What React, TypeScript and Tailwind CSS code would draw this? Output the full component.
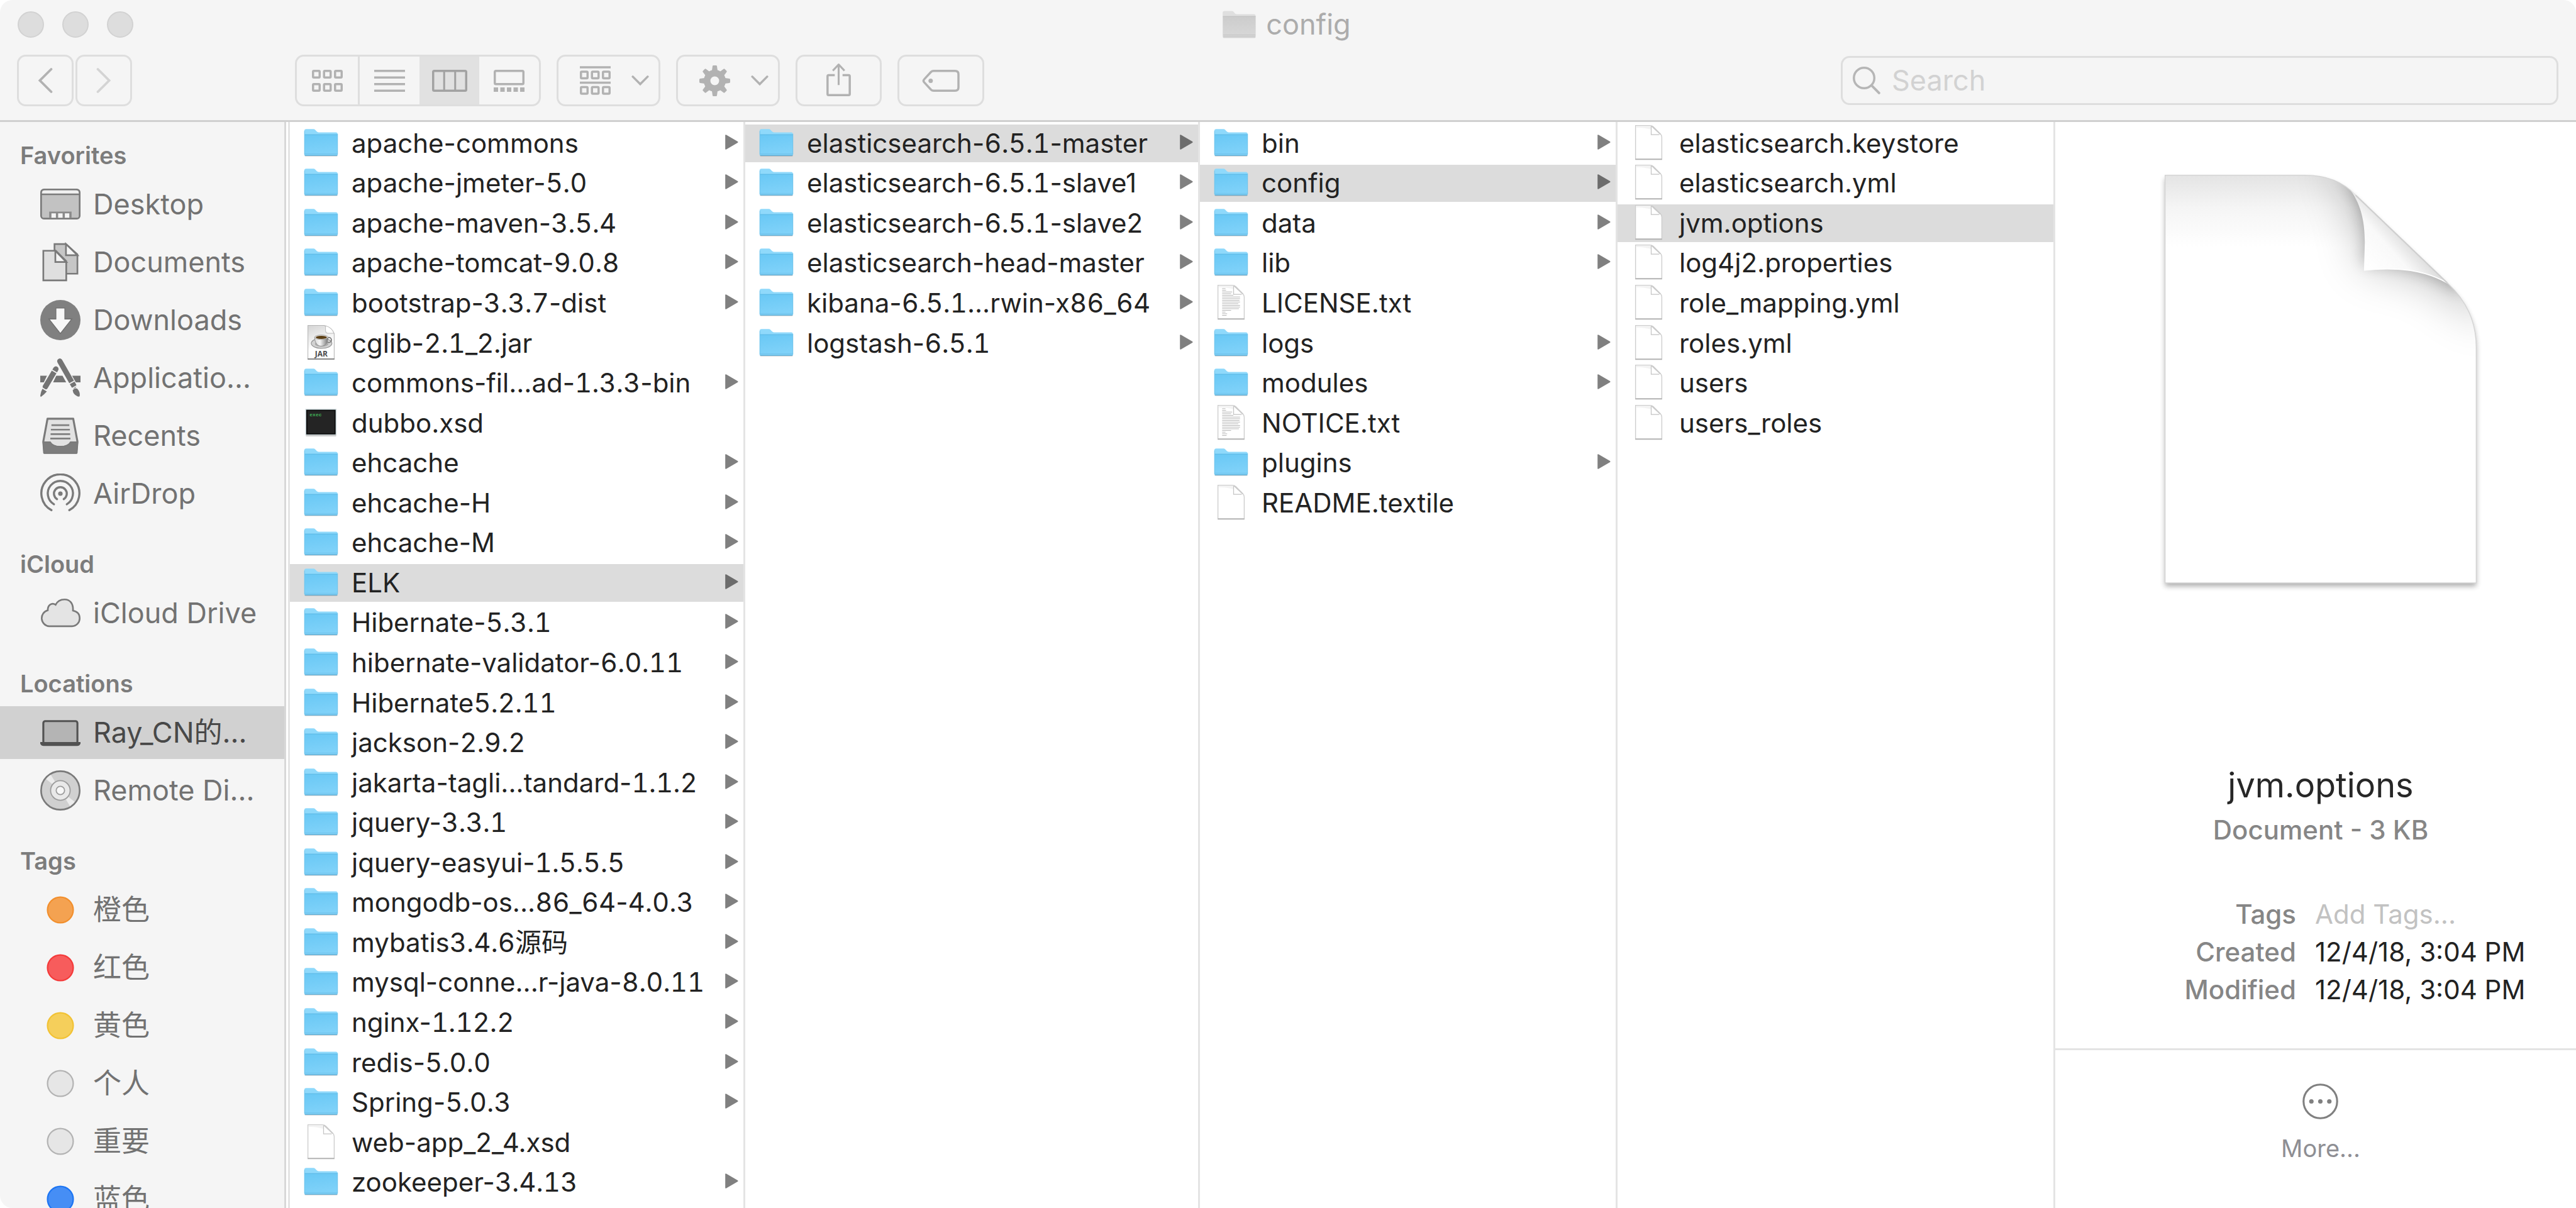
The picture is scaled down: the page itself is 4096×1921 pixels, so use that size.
import React from "react";

type Kind = "folder" | "file" | "text" | "jar" | "exec";
type Entry = { name: string; kind?: Kind; selected?: boolean };

const dir = (name: string, selected = false): Entry => ({ name, kind: "folder", selected });
const file = (name: string, kind: Kind = "file", selected = false): Entry => ({ name, kind, selected });

const columns: { label: string; entries: Entry[] }[] = [
  {
    label: "Software",
    entries: [
      dir("apache-commons"),
      dir("apache-jmeter-5.0"),
      dir("apache-maven-3.5.4"),
      dir("apache-tomcat-9.0.8"),
      dir("bootstrap-3.3.7-dist"),
      file("cglib-2.1_2.jar", "jar"),
      dir("commons-fil...ad-1.3.3-bin"),
      file("dubbo.xsd", "exec"),
      dir("ehcache"),
      dir("ehcache-H"),
      dir("ehcache-M"),
      dir("ELK", true),
      dir("Hibernate-5.3.1"),
      dir("hibernate-validator-6.0.11"),
      dir("Hibernate5.2.11"),
      dir("jackson-2.9.2"),
      dir("jakarta-tagli...tandard-1.1.2"),
      dir("jquery-3.3.1"),
      dir("jquery-easyui-1.5.5.5"),
      dir("mongodb-os...86_64-4.0.3"),
      dir("mybatis3.4.6源码"),
      dir("mysql-conne...r-java-8.0.11"),
      dir("nginx-1.12.2"),
      dir("redis-5.0.0"),
      dir("Spring-5.0.3"),
      file("web-app_2_4.xsd"),
      dir("zookeeper-3.4.13"),
    ],
  },
  {
    label: "ELK",
    entries: [
      dir("elasticsearch-6.5.1-master", true),
      dir("elasticsearch-6.5.1-slave1"),
      dir("elasticsearch-6.5.1-slave2"),
      dir("elasticsearch-head-master"),
      dir("kibana-6.5.1...rwin-x86_64"),
      dir("logstash-6.5.1"),
    ],
  },
  {
    label: "elasticsearch-6.5.1-master",
    entries: [
      dir("bin"),
      dir("config", true),
      dir("data"),
      dir("lib"),
      file("LICENSE.txt", "text"),
      dir("logs"),
      dir("modules"),
      file("NOTICE.txt", "text"),
      dir("plugins"),
      file("README.textile"),
    ],
  },
  {
    label: "config",
    entries: [
      file("elasticsearch.keystore"),
      file("elasticsearch.yml"),
      file("jvm.options", "file", true),
      file("log4j2.properties"),
      file("role_mapping.yml"),
      file("roles.yml"),
      file("users"),
      file("users_roles"),
    ],
  },
];

/* ---------- file list icons ---------- */

function Defs() {
  return (
    <svg aria-hidden="true" className="absolute h-0 w-0">
      <defs>
        <linearGradient id="folderFront" x1="0" y1="0" x2="0.2" y2="1">
          <stop offset="0" stopColor="#69c8f5" />
          <stop offset="1" stopColor="#80d2f9" />
        </linearGradient>
        <linearGradient id="grayFront" x1="0" y1="0" x2="0" y2="1">
          <stop offset="0" stopColor="#cccccc" />
          <stop offset="1" stopColor="#d8d8d8" />
        </linearGradient>
        <linearGradient id="jarPage" x1="0" y1="0" x2="0.3" y2="1">
          <stop offset="0" stopColor="#d4d4d4" />
          <stop offset="0.7" stopColor="#ffffff" />
        </linearGradient>
        <linearGradient id="cup" x1="0" y1="0" x2="1" y2="0">
          <stop offset="0" stopColor="#dcdcdc" />
          <stop offset="0.4" stopColor="#f4f4f4" />
          <stop offset="1" stopColor="#777777" />
        </linearGradient>
      </defs>
    </svg>
  );
}

function FolderIcon() {
  return (
    <svg viewBox="0 0 64 72" className="h-16 w-[57px] shrink-0" aria-hidden="true">
      <rect x="2.5" y="56" width="59" height="3.5" rx="1.5" fill="#000" opacity="0.13" />
      <path d="M2 14q0-3.500 3.500-3.500h13q1.800 0 3 1.300l3 3.200q1.200 1.300 3 1.300h31q3 0 3 3V56q0 2-2 2H4q-2 0-2-2z" fill="#8fd9fb" />
      <path d="M2.500 20H61.500V56q0 1.500-1.500 1.500H4q-1.500 0-1.500-1.500z" fill="url(#folderFront)" />
      <path d="M2.500 20.500H61.500" stroke="#5db8e4" strokeWidth="1.200" />
      <path d="M3 54.500H61" stroke="#6fc3ec" strokeWidth="1" />
      <path d="M3 57.500H61" stroke="#58a7cf" strokeWidth="1.500" />
      <path d="M2.500 14V56M61.500 19V56" stroke="#69bfe8" strokeWidth="1" />
    </svg>
  );
}

function PageIcon({ lines = false }: { lines?: boolean }) {
  return (
    <svg viewBox="0 0 64 72" className="h-16 w-[57px] shrink-0" aria-hidden="true">
      <path d="M8.500 4H34q4 0 6.500 2.500L53 19q2.500 2.500 2.500 6V64H8.500z" fill="#fff" stroke="#cccccc" strokeWidth="1.500" />
      <path d="M9 8V5H34q4 0 5 4L38 12Q24 7 9 8z" fill="#eeeeee" opacity="0.7" />
      <path d="M36.500 5V20.500H51" fill="#fff" stroke="#c4c4c4" strokeWidth="1.400" />
      <path d="M37 5L53 20" stroke="#c8c8c8" strokeWidth="1.600" />
      <path d="M8 64.500H56" stroke="#b2b2b2" strokeWidth="1.800" />
      {lines && (
        <g stroke="#a5a5a5" strokeWidth="0.900">
          <path d="M16 10h6M16 13h7M16 16h18M16 19h16M16 22h20M16 25h32M16 28h32M16 31h31M16 34h32M16 37h29M16 40h32M16 43h32M16 46h30M16 49h16M16 52h6M16 55h9M16 58h8" />
        </g>
      )}
    </svg>
  );
}

function JarIcon() {
  return (
    <svg viewBox="0 0 64 72" className="h-16 w-[57px] shrink-0" aria-hidden="true">
      <path d="M8.500 4H38L55.500 18V64H8.500z" fill="url(#jarPage)" stroke="#b5b5b5" strokeWidth="1.200" />
      <path d="M40 4.500V13q0 5 5 5h10Q52 8 40 4.500z" fill="#fff" stroke="#bcbcbc" strokeWidth="1.200" />
      <ellipse cx="33" cy="36" rx="18.500" ry="9" fill="#d2d2d2" stroke="#8d8d8d" strokeWidth="1.200" />
      <ellipse cx="33" cy="37" rx="12" ry="5" fill="#aaaaaa" />
      <circle cx="46" cy="30" r="4.500" fill="none" stroke="#777" strokeWidth="2" />
      <path d="M20.500 25.500C21 36 26 41 32.500 41S44 36 44.500 25.500z" fill="url(#cup)" stroke="#7d7d7d" strokeWidth="0.800" />
      <ellipse cx="32.500" cy="25" rx="12" ry="4" fill="#e8e8e8" stroke="#8a8a8a" strokeWidth="0.800" />
      <ellipse cx="32.500" cy="25.300" rx="10" ry="2.800" fill="#5c3f15" />
      <text x="32.500" y="60" textAnchor="middle" fontFamily="Open Sans" fontWeight="700" fontSize="13.500" fill="#4a4a4a">
        JAR
      </text>
      <path d="M8 64H56" stroke="#7c7c7c" strokeWidth="2.200" />
    </svg>
  );
}

function ExecIcon() {
  return (
    <svg viewBox="0 0 64 72" className="h-16 w-[57px] shrink-0" aria-hidden="true">
      <path d="M5 57H59" stroke="#000" strokeWidth="5" opacity="0.2" />
      <rect x="4" y="10.500" width="55.500" height="46.500" fill="#c4d2d6" />
      <rect x="5.500" y="12" width="52.500" height="44" fill="#0c0c0c" />
      <rect x="7.500" y="14" width="48.500" height="40" fill="#242424" />
      <text x="11.500" y="23.500" fontFamily="Liberation Mono" fontWeight="700" fontSize="9" fill="#3fae55">
        exec
      </text>
    </svg>
  );
}

function EntryIcon({ kind }: { kind?: Kind }) {
  if (kind === "folder") return <FolderIcon />;
  if (kind === "jar") return <JarIcon />;
  if (kind === "exec") return <ExecIcon />;
  return <PageIcon lines={kind === "text"} />;
}

function EntryName({ name }: { name: string }) {
  return (
    <span className="min-w-0 flex-1 text-[42px] leading-[56px] whitespace-nowrap text-[#222222]">
      {name.split(/(\d[\d.]*\d)/).map((part, i) =>
        i % 2 === 1 ? (
          <span key={i} className="tabular-nums">
            {part}
          </span>
        ) : (
          part
        ),
      )}
    </span>
  );
}

function Column({ label, entries }: { label: string; entries: Entry[] }) {
  return (
    <ul
      aria-label={label}
      className="grid min-h-0 min-w-0 grid-cols-[minmax(0,1fr)] grid-rows-[repeat(27,minmax(0,1fr))] gap-1 border-r-[3px] border-[#e4e4e4] bg-white pt-1 pb-[11px]"
    >
      {entries.map((e) => (
        <li key={e.name} className="min-h-0">
          <button
            type="button"
            aria-pressed={!!e.selected}
            className={`flex h-full w-full items-center gap-5 pr-2 pl-[21px] text-left ${e.selected ? "bg-[#dcdcdc]" : ""}`}
          >
            <EntryIcon kind={e.kind} />
            <EntryName name={e.name} />
            {e.kind === "folder" && (
              <svg viewBox="0 0 24 28" className={`mb-1 h-6 w-[21px] shrink-0 ${e.selected ? "text-[#6c6c6c]" : "text-[#808080]"}`} aria-hidden="true">
                <path d="M0 1.500Q0-.5 2 .6L23 12.700Q24.500 14 23 15.300L2 27.400Q0 28.500 0 26.500z" fill="currentColor" />
              </svg>
            )}
          </button>
        </li>
      ))}
    </ul>
  );
}

/* ---------- sidebar ---------- */

const sideIcons: Record<string, React.ReactNode> = {
  desktop: (
    <>
      <rect x="1.500" y="9.500" width="69" height="52" rx="5" fill="#c2c2c2" stroke="#7a7a7a" strokeWidth="3" />
      <path d="M3 17q0-6 5-6h56q5 0 5 6z" fill="#f0f0f0" />
      <path d="M2 18H70" stroke="#7a7a7a" strokeWidth="3" />
      <path d="M16 60V49H56V60z" fill="#8a8a8a" />
      <path d="M20 52h8v8h-8zM32 52h8v8h-8zM44 52h8v8h-8z" fill="#f4f4f4" />
    </>
  ),
  documents: (
    <g stroke="#7a7a7a" strokeWidth="3">
      <path d="M25.500 3.500H46L66.500 22V56.500H25.500z" fill="#c6c6c6" />
      <path d="M46 3.500V23.500H66.500z" fill="#f5f5f5" />
      <path d="M5.500 15.500H28L46.500 34V68.500H5.500z" fill="#dfdfdf" />
      <path d="M27 15.500V35.500H46.500z" fill="#f5f5f5" />
    </g>
  ),
  downloads: (
    <>
      <circle cx="36" cy="36" r="36" fill="#808080" />
      <path d="M28 14.500H44V34H56.500L36 60 15.500 34H28z" fill="#f7f7f7" stroke="#6f6f6f" strokeWidth="1.500" />
    </>
  ),
  applications: (
    <>
      <path d="M0 32H72V44H0z" fill="#747474" />
      <path d="M28 16L7 60M34 6L66 64" stroke="#f5f5f5" strokeWidth="15" />
      <path d="M35 6L60 50" stroke="#747474" strokeWidth="9.500" strokeLinecap="round" />
      <path d="M28 20L9 52" stroke="#747474" strokeWidth="9.500" strokeLinecap="round" />
      <path d="M4 55L12 60Q8 65 1 70L0 68Q1 60 4 55z" fill="#747474" />
      <path d="M58 58Q62 53 66 55Q72 61 70.500 69Q68 70 66 68.500Q59 66 58 58z" fill="#747474" />
      <path d="M21 22L33 29M49 48L62 41M53 57L67 49M2 53L15 61" stroke="#f5f5f5" strokeWidth="2" />
    </>
  ),
  recents: (
    <>
      <path d="M13 5.500H59L66.500 46 65 66.500H7L5.500 46z" fill="#e2e2e2" stroke="#7a7a7a" strokeWidth="3.500" strokeLinejoin="round" />
      <path d="M20 17H52M19 25H53M18.500 33H53.500M18 41H54" stroke="#7f7f7f" strokeWidth="3" />
      <path d="M5 47H18Q22 55 36 55T54 47H67L65 67H7z" fill="#7d7d7d" stroke="#7a7a7a" strokeWidth="2" strokeLinejoin="round" />
      <path d="M19 46.500Q23 54 36 54T53 46.500" fill="#e2e2e2" />
    </>
  ),
  airdrop: (
    <g fill="none" stroke="#7a7a7a" strokeWidth="3.800" strokeLinecap="round">
      <circle cx="36" cy="36" r="4" fill="#7a7a7a" stroke="none" />
      <path d="M30 45.800A11.500 11.500 0 1 1 42 45.800" />
      <path d="M24.500 55A22.500 22.500 0 1 1 47.500 55" />
      <path d="M20 65.500A34 34 0 1 1 52 65.500" />
    </g>
  ),
  cloud: (
    <path
      d="M16 59.500A14.500 14.500 0 0 1 13.500 31C13 21 21 16.500 27.500 21C31 14 37 11.500 43.500 11.500C53 11.500 59.500 19 58.500 31.500C66 33 70.500 38 70.500 45A14 14 0 0 1 57 59.500z"
      fill="#e4e4e4"
      stroke="#7a7a7a"
      strokeWidth="3"
    />
  ),
  laptop: (
    <>
      <rect x="5.500" y="15.500" width="61" height="40" rx="3.500" fill="#b4b4b4" stroke="#525252" strokeWidth="3.500" />
      <path d="M0 53H72V56Q70 60 66 60H6Q2 60 0 56z" fill="#525252" />
    </>
  ),
  disc: (
    <>
      <circle cx="36" cy="36" r="34.500" fill="#d0d0d0" />
      <path d="M36 36L9 14.500A34 34 0 0 1 18 6.500zM36 36L63 57.500A34 34 0 0 1 54 65.500z" fill="#ececec" />
      <circle cx="36" cy="36" r="34.500" fill="none" stroke="#7a7a7a" strokeWidth="3" />
      <circle cx="36" cy="36" r="17.500" fill="#e9e9e9" stroke="#9c9c9c" strokeWidth="2" />
      <circle cx="36" cy="36" r="7.500" fill="#f8f8f8" stroke="#9c9c9c" strokeWidth="2" />
    </>
  ),
};

const tag = (fill: string, stroke: string) => <circle cx="36" cy="36" r="23" fill={fill} stroke={stroke} strokeWidth="2.500" />;

type SideItem = { label: string; icon: React.ReactNode; active?: boolean };
const sections: { title: string; items: SideItem[] }[] = [
  {
    title: "Favorites",
    items: [
      { label: "Desktop", icon: sideIcons.desktop },
      { label: "Documents", icon: sideIcons.documents },
      { label: "Downloads", icon: sideIcons.downloads },
      { label: "Applicatio...", icon: sideIcons.applications },
      { label: "Recents", icon: sideIcons.recents },
      { label: "AirDrop", icon: sideIcons.airdrop },
    ],
  },
  { title: "iCloud", items: [{ label: "iCloud Drive", icon: sideIcons.cloud }] },
  {
    title: "Locations",
    items: [
      { label: "Ray_CN的...", icon: sideIcons.laptop, active: true },
      { label: "Remote Di...", icon: sideIcons.disc },
    ],
  },
  {
    title: "Tags",
    items: [
      { label: "橙色", icon: tag("#f4a251", "#f28f2c") },
      { label: "红色", icon: tag("#f75c5c", "#f43a3a") },
      { label: "黄色", icon: tag("#f5cf5b", "#f2c233") },
      { label: "个人", icon: tag("#e6e6e6", "#b3b3b3") },
      { label: "重要", icon: tag("#e6e6e6", "#b3b3b3") },
      { label: "蓝色", icon: tag("#468ef5", "#1c75f3") },
    ],
  },
];

function Sidebar() {
  return (
    <nav aria-label="Sidebar" className="flex min-h-0 min-w-0 border-r-[3px] border-[#e4e4e4]">
      <div className="flex min-w-0 flex-1 flex-col gap-[46px] overflow-hidden border-r-[3px] border-[#d8d8d8] bg-[#f5f5f5] pt-[29px]">
        {sections.map((s) => (
          <section key={s.title} className="shrink-0">
            <h2 className="mb-3 pl-8 text-[38px] leading-[48px] font-semibold text-[#7c7c7c]">{s.title}</h2>
            <ul className="flex flex-col gap-2">
              {s.items.map((it) => (
                <li key={it.label}>
                  <a
                    href="#"
                    aria-current={it.active ? "page" : undefined}
                    className={`flex h-[84px] items-center gap-5 pl-16 text-[45px] leading-[60px] whitespace-nowrap ${
                      it.active ? "bg-[#d1d1d1] text-[#484848]" : "text-[#727272]"
                    }`}
                  >
                    <svg viewBox="0 0 72 72" className="h-16 w-16 shrink-0" aria-hidden="true">
                      {it.icon}
                    </svg>
                    {it.label}
                  </a>
                </li>
              ))}
            </ul>
          </section>
        ))}
      </div>
      <div className="w-[3px] bg-white" />
    </nav>
  );
}

/* ---------- toolbar ---------- */

const toolButton = "flex h-[82px] items-center rounded-[14px] border-[3px] border-[#dedede] bg-[#f5f5f5] text-[#b2b2b2]";

function SixTiles({ y = 0, gap = 24 }: { y?: number; gap?: number }) {
  return (
    <g fill="none" stroke="currentColor" strokeWidth="4">
      {[0, 1].map((r) => [0, 1, 2].map((c) => <rect key={`${r}${c}`} x={2 + c * 20} y={y + 2 + r * gap} width="12" height="12" rx="1.500" />))}
    </g>
  );
}

function DownChevron() {
  return (
    <svg viewBox="0 0 32 20" className="h-[18px] w-7" fill="none" stroke="currentColor" strokeWidth="4" strokeLinecap="round" aria-hidden="true">
      <path d="M2.500 3L16 16.500 29.500 3" />
    </svg>
  );
}

function Header() {
  const gearTeeth = [0, 45, 90, 135, 180, 225, 270, 315];
  return (
    <header className="shrink-0 border-b-[3px] border-[#d0d0d0] bg-[#f5f5f5] pb-[22px]">
      <div className="grid h-[78px] grid-cols-[1fr_auto_1fr] items-center">
        <div className="flex gap-[29px] pl-7">
          {["Close", "Minimize", "Zoom"].map((n) => (
            <button key={n} type="button" aria-label={n} className="h-[42px] w-[42px] rounded-full border-2 border-[#d2d2d2] bg-[#dddddd]" />
          ))}
        </div>
        <h1 className="flex items-center gap-4 pr-1 text-[45px] leading-[60px] text-[#acacac]">
          <svg viewBox="0 0 60 50" className="h-11 w-[53px]" aria-hidden="true">
            <rect x="0.500" y="46" width="59" height="3.500" rx="1.500" fill="#000" opacity="0.1" />
            <path d="M0 4q0-3.500 3.500-3.500h13q1.800 0 3 1.300l3 3.200q1.200 1.300 3 1.300h31q3 0 3 3V46q0 2-2 2H2q-2 0-2-2z" fill="#dfdfdf" />
            <path d="M0.500 10H59.500V46q0 1.500-1.500 1.500H2q-1.500 0-1.500-1.500z" fill="url(#grayFront)" />
            <path d="M0.500 10.500H59.500M1 44H59M1 47.500H59" stroke="#c0c0c0" strokeWidth="1.200" />
          </svg>
          config
        </h1>
      </div>
      <div className="mt-[9px] flex items-center gap-[25px] pr-7 pl-[27px]">
        <div className="mr-[234px] flex gap-[3px]">
          <button type="button" aria-label="Back" className={`${toolButton} w-[90px] justify-center`}>
            <svg viewBox="0 0 28 48" className="h-[42px] w-6" fill="none" stroke="currentColor" strokeWidth="4.500" strokeLinecap="round" aria-hidden="true">
              <path d="M25 3L4 24 25 45" />
            </svg>
          </button>
          <button type="button" aria-label="Forward" className={`${toolButton} w-[90px] justify-center`}>
            <svg viewBox="0 0 28 48" className="h-[42px] w-6" fill="none" stroke="#d4d4d4" strokeWidth="4.500" strokeLinecap="round" aria-hidden="true">
              <path d="M3 3L24 24 3 45" />
            </svg>
          </button>
        </div>
        <div role="group" aria-label="View" className="grid h-[82px] w-[391px] grid-cols-[101fr_96fr_95fr_96fr] overflow-hidden rounded-[14px] border-[3px] border-[#dedede] text-[#b2b2b2]">
          <button type="button" aria-label="Icons" className="flex items-center justify-center border-r-[3px] border-[#dedede]">
            <svg viewBox="0 0 56 40" className="h-[35px] w-[49px]" aria-hidden="true">
              <SixTiles />
            </svg>
          </button>
          <button type="button" aria-label="List" className="flex items-center justify-center">
            <svg viewBox="0 0 56 40" className="h-[35px] w-[49px]" aria-hidden="true">
              <path d="M0 2H56M0 14H56M0 26H56M0 38H56" stroke="currentColor" strokeWidth="4" />
            </svg>
          </button>
          <button type="button" aria-label="Columns" aria-pressed="true" className="flex items-center justify-center bg-[#e1e1e1] text-[#a2a2a2]">
            <svg viewBox="0 0 64 40" className="h-[35px] w-14" fill="none" stroke="currentColor" strokeWidth="4" aria-hidden="true">
              <rect x="2" y="2" width="60" height="36" rx="2" />
              <path d="M22 2V38M42 2V38" strokeWidth="3.500" />
            </svg>
          </button>
          <button type="button" aria-label="Gallery" className="flex items-center justify-center">
            <svg viewBox="0 0 56 40" className="h-[35px] w-[49px]" aria-hidden="true">
              <rect x="2" y="2" width="52" height="24" rx="2" fill="none" stroke="currentColor" strokeWidth="4" />
              <path d="M0 36H56" stroke="currentColor" strokeWidth="8" strokeDasharray="8 4" />
            </svg>
          </button>
        </div>
        <button type="button" aria-label="Group items" aria-haspopup="menu" className={`${toolButton} w-[165px] justify-start gap-[33px] pl-[34px]`}>
          <svg viewBox="0 0 56 52" className="h-[46px] w-[49px]" aria-hidden="true">
            <path d="M0 2H56M0 30H56" stroke="currentColor" strokeWidth="4" />
            <SixTiles y={8} gap={28} />
          </svg>
          <DownChevron />
        </button>
        <button type="button" aria-label="Actions" aria-haspopup="menu" className={`${toolButton} w-[165px] justify-start gap-[33px] pl-[34px]`}>
          <svg viewBox="0 0 56 56" className="h-[49px] w-[49px]" aria-hidden="true">
            <g fill="currentColor">
              {gearTeeth.map((a) => (
                <path key={a} d="M22.500 12L24 1.500Q24.200 0 25.600 0H30.400Q31.800 0 32 1.500L33.500 12z" transform={`rotate(${a} 28 28)`} />
              ))}
            </g>
            <circle cx="28" cy="28" r="14" fill="none" stroke="currentColor" strokeWidth="12" />
          </svg>
          <DownChevron />
        </button>
        <button type="button" aria-label="Share" className={`${toolButton} w-[137px] justify-center`}>
          <svg viewBox="0 0 44 60" className="mb-1 h-[53px] w-[39px]" fill="none" stroke="currentColor" strokeWidth="4" strokeLinejoin="round" aria-hidden="true">
            <path d="M15 22H4Q2 22 2 24V56Q2 58 4 58H40Q42 58 42 56V24Q42 22 40 22H29" />
            <path d="M22 40V3M11.500 14L22 3 32.500 14" strokeWidth="3.500" />
          </svg>
        </button>
        <button type="button" aria-label="Edit tags" className={`${toolButton} w-[138px] justify-center`}>
          <svg viewBox="0 0 68 40" className="h-[35px] w-[60px]" fill="none" stroke="currentColor" strokeWidth="4" aria-hidden="true">
            <path d="M21 2H60Q66 2 66 8V32Q66 38 60 38H21Q18 38 16 36L4 23Q1 20 4 17L16 4Q18 2 21 2z" />
            <circle cx="15.500" cy="20" r="4" fill="currentColor" stroke="none" />
          </svg>
        </button>
        <label className="ml-auto flex h-[78px] w-[1141px] items-center gap-[18px] rounded-[14px] border-[3px] border-[#dedede] bg-[#f5f5f5] pl-4 text-[#b6b6b6]">
          <svg viewBox="0 0 50 50" className="h-11 w-11 shrink-0" fill="none" stroke="currentColor" strokeWidth="4" strokeLinecap="round" aria-hidden="true">
            <circle cx="20.500" cy="20.500" r="18.500" />
            <path d="M34 34L47.500 47.500" strokeWidth="4.500" />
          </svg>
          <input
            type="search"
            aria-label="Search"
            placeholder="Search"
            className="min-w-0 flex-1 bg-transparent text-[45px] leading-[60px] outline-none placeholder:text-[#d2d2d2]"
          />
        </label>
      </div>
    </header>
  );
}

/* ---------- preview ---------- */

const PAGE = "M0 0H251C292 0 320 12 343 36L508 194C542 226 560 262 560 310V734H0z";

function BigDocument() {
  return (
    <svg viewBox="-20 -20 600 780" className="h-[689px] w-[530px]" role="img" aria-label="Document icon">
      <defs>
        <clipPath id="pageClip">
          <path d={PAGE} />
        </clipPath>
        <linearGradient id="topShade" x1="0" y1="0" x2="0" y2="130" gradientUnits="userSpaceOnUse">
          <stop offset="0" stopColor="#e4e4e4" />
          <stop offset="0.45" stopColor="#f5f5f5" />
          <stop offset="1" stopColor="#ffffff" />
        </linearGradient>
        <linearGradient id="flap" x1="365" y1="165" x2="435" y2="102" gradientUnits="userSpaceOnUse">
          <stop offset="0" stopColor="#ffffff" />
          <stop offset="0.55" stopColor="#f9f9f9" />
          <stop offset="1" stopColor="#d6d6d6" />
        </linearGradient>
        <filter id="wide" x="-100%" y="-100%" width="300%" height="300%">
          <feGaussianBlur stdDeviation="42" />
        </filter>
        <filter id="tight" x="-50%" y="-50%" width="200%" height="200%">
          <feGaussianBlur stdDeviation="14" />
        </filter>
        <filter id="pageShadow" x="-10%" y="-10%" width="120%" height="120%">
          <feGaussianBlur stdDeviation="5" />
        </filter>
      </defs>
      <path d={PAGE} transform="translate(0 6)" fill="#000" opacity="0.32" filter="url(#pageShadow)" />
      <path d={PAGE} fill="#fff" />
      <g clipPath="url(#pageClip)">
        <path d={PAGE} fill="url(#topShade)" />
        <path d="M300 -30C352 54 358 90 358 165C420 160 480 170 580 270L600 -30z" fill="#000" opacity="0.26" filter="url(#wide)" />
        <path d="M325 0C356 54 362 90 362 120L358 160C430 160 470 168 530 210L600 0z" fill="#000" opacity="0.26" filter="url(#tight)" />
      </g>
      <path d={PAGE} fill="none" stroke="#d3d3d3" strokeWidth="1.500" />
      <path d="M334 27C354 56 359 85 359.500 120L358 171C420 164 470 172 508 194L343 36z" fill="url(#flap)" />
      <path d="M358 171C420 164 470 172 508 194" fill="none" stroke="#fff" strokeWidth="2" />
      <path d="M343 36L508 194" stroke="#cfcfcf" strokeWidth="2.500" />
    </svg>
  );
}

function Preview() {
  return (
    <aside aria-label="Preview" className="flex min-h-0 min-w-0 flex-col overflow-hidden bg-white">
      <div className="flex flex-col items-center pt-[67px] pl-4">
        <BigDocument />
        <h2 className="mt-[267px] text-[54px] leading-[64px] text-[#272727]">jvm.options</h2>
        <p className="mt-[9px] text-[42px] leading-[60px] font-medium text-[#868686]">Document - 3 KB</p>
      </div>
      <dl className="mt-[74px] grid grid-cols-[383fr_415fr] gap-x-[30px] text-[42px] leading-[60px] text-[#222222]">
        <dt className="text-right font-medium text-[#868686]">
          <label htmlFor="tags">Tags</label>
        </dt>
        <dd className="flex">
          <input id="tags" placeholder="Add Tags..." className="h-[60px] w-full min-w-0 bg-transparent outline-none placeholder:text-[#c2c2c2]" />
        </dd>
        <dt className="text-right font-medium text-[#868686]">Created</dt>
        <dd className="whitespace-nowrap">12/4/18, 3:04 PM</dd>
        <dt className="text-right font-medium text-[#868686]">Modified</dt>
        <dd className="whitespace-nowrap">12/4/18, 3:04 PM</dd>
      </dl>
      <div className="mt-[63px] flex justify-center border-t-[3px] border-[#e4e4e4] pt-[53px] pl-4">
        <button type="button" className="flex flex-col items-center gap-5 text-[38px] leading-[52px] text-[#8e8e93]">
          <svg viewBox="0 0 64 64" className="h-[57px] w-[57px]" aria-hidden="true">
            <circle cx="32" cy="32" r="30" fill="none" stroke="#808080" strokeWidth="3.500" />
            <g fill="#808080">
              <circle cx="16" cy="32" r="4" />
              <circle cx="32" cy="32" r="4" />
              <circle cx="48" cy="32" r="4" />
            </g>
          </svg>
          More...
        </button>
      </div>
    </aside>
  );
}

export default function App() {
  return (
    <div className="h-screen bg-white font-['Inter','Noto_Sans_CJK_SC',sans-serif]">
      <Defs />
      <div className="flex h-full flex-col overflow-hidden rounded-[20px] bg-white">
        <Header />
        <main className="grid min-h-0 flex-1 grid-cols-[461px_724fr_723fr_664fr_696fr_828fr]">
          <Sidebar />
          {columns.map((c) => (
            <Column key={c.label} label={c.label} entries={c.entries} />
          ))}
          <Preview />
        </main>
      </div>
    </div>
  );
}
